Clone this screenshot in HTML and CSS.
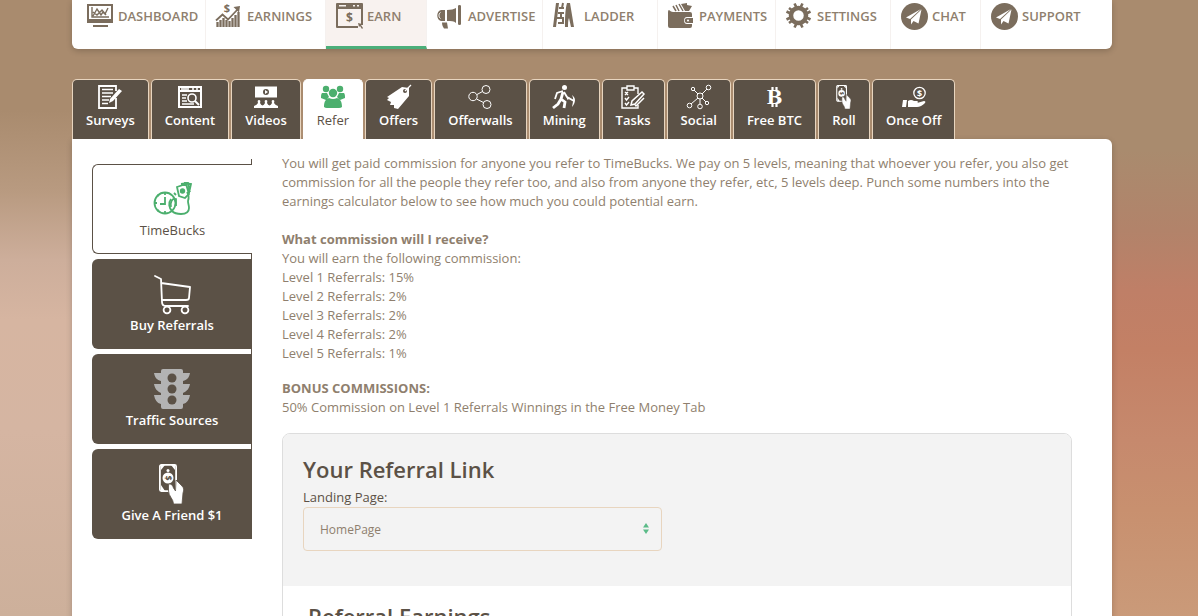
FILE: index.html
```html
<!DOCTYPE html>
<html lang="en">
<head>
  <meta charset="UTF-8" />
  <meta name="viewport" content="width=device-width, initial-scale=1.0" />
  <title>TimeBucks - Refer</title>
  <link rel="stylesheet" href="styles.css">
</head>
<body>
  <!-- icons used more than once -->
  <svg class="sprite" aria-hidden="true">
    <symbol id="icon-cash-hand" viewBox="0 0 40 40">
      <rect x="7.900" y="0.900" width="16.200" height="26.200" rx="1.500" fill="none" stroke="currentColor" stroke-width="1.800"/>
      <path d="M9 1h4L9 6zM23 1h-4l4 5zM9 27v-6l4 6z" fill="currentColor"/>
      <circle cx="16" cy="6.500" r="1.500" fill="currentColor"/>
      <circle cx="16" cy="14" r="5.500" fill="currentColor"/>
      <text x="16" y="17.200" font-size="9" font-weight="bold" text-anchor="middle" fill="#5b5146" transform="rotate(90 16 14)">$</text>
      <path d="M17.500 20c2 0 3 1 4 4l2 3 .500-11 6 6c2 2 2 4 1 7l-1 11H21.500c0-5-5-8-5-13v-5q0-2 1-2z" fill="currentColor" stroke="#5b5146" stroke-width="0.800"/>
    </symbol>
    <symbol id="icon-plane" viewBox="0 0 27 27">
      <circle cx="13.500" cy="13.500" r="13.500" fill="currentColor"/>
      <path d="M20 6 5 14.500l4 1.500zM20.500 6.500 10 16.500v5l2.500-3.500 5 2.500z" fill="#fff"/>
    </symbol>
  </svg>

  <div class="container">
    <nav class="main-nav">
      <a href="#">
        <svg class="nav-icon" viewBox="0 0 27 27"><path d="M0 1h26v19H0zm2 2v13h22V3zM6 22h15v2H6z" fill="currentColor" fill-rule="evenodd"/><path d="M5 4v10h17M6 13l4-7 4 6 2-3 2 2 3-6M6 9l4 3 5-5 4 5" fill="none" stroke="currentColor" stroke-width="1.400"/></svg>
        Dashboard
      </a>
      <a href="#">
        <svg class="nav-icon" viewBox="0 0 27 27"><path d="M1.500 19v5M4.500 17v7M7.500 15v9M10.500 17v7M13.500 18v6M16.500 15v9M19.500 12v12M22.500 9v15" stroke="currentColor" stroke-width="2.300"/><path d="M0 17.500l6.500-6 5.500 5L22 6" fill="none" stroke="currentColor" stroke-width="1.800"/><path d="M17.500 4l6.500-1-1 6.500z" fill="currentColor"/><text x="11" y="9" font-size="11" font-weight="bold" text-anchor="middle" fill="currentColor">$</text></svg>
        Earnings
      </a>
      <a href="#" class="active">
        <svg class="nav-icon" viewBox="0 0 27 27"><path d="M1 0h25q1 0 1 1v21h-2V6H2v17h20v2H1q-1 0-1-1V1q0-1 1-1zm2 2v1.500h7V2zm14 0v1.500h2V2zm4 0v1.500h2V2z" fill="currentColor" fill-rule="evenodd"/><text x="13.500" y="19" font-size="12" font-weight="bold" text-anchor="middle" fill="currentColor">$</text><path d="M22 20l4 1-1 1 2 3-1 1-2-3-1 1z" fill="currentColor"/></svg>
        Earn
      </a>
      <a href="#">
        <svg class="nav-icon" viewBox="0 0 27 27"><path d="M4 7h4v11H4c-5-1-5-10 0-11zM10 7c4 0 7-1 9-2v15c-2-2-5-2-9-2zM21 3q0-1 1.500-1t1.500 1v18q0 1-1.500 1T21 21zM5 19.500h5l1 6H7c-1-2-2-3-2-6z" fill="currentColor"/><path d="M3.500 9.500c-2 1-2 5 0 6" fill="none" stroke="#fff"/></svg>
        Advertise
      </a>
      <a href="#">
        <svg class="nav-icon" viewBox="0 0 27 27"><path d="M3 0h3L3 24H0zM14 0h3l4 24h-3l-2-9c-1 2-1 6-1 9h-3c0-7 0-17 2-24z" fill="currentColor"/><path d="M6 5h5M5 10h6M4 15h6v5H5M10 0 9 5M8 10v5" fill="none" stroke="currentColor" stroke-width="2"/></svg>
        Ladder
      </a>
      <a href="#">
        <svg class="nav-icon" viewBox="0 0 27 27"><path d="M1 7q2 2 4 2h17q2 0 2 2v3h-5c-4 0-4 7 0 7h5v2q0 2-2 2H2q-2 0-2-2V9q0-2 1-2zM19 15h6v5h-6c-3 0-3-5 0-5zM13 1l6-1v2l5 1-3 5h-4z" fill="currentColor"/><path d="M5 3l3 5M8 2l3 6M11 1l4 7" stroke="currentColor" stroke-width="1.500"/><circle cx="20" cy="17.500" r="1" fill="#fff"/></svg>
        Payments
      </a>
      <a href="#">
        <svg class="nav-icon" viewBox="0 0 27 27"><circle cx="12.500" cy="12.500" r="7.500" fill="none" stroke="currentColor" stroke-width="4.500"/><path d="M8.500.500l2 4M16.500.500l-2 4M8.500 24.500l2-4M16.500 24.500l-2-4M.500 8.500l4 2M.500 16.500l4-2M24.500 8.500l-4 2M24.500 16.500l-4-2M3 5l4 3M22 5l-4 3M3 20l4-3M22 20l-4-3" stroke="currentColor" stroke-width="2.600"/></svg>
        Settings
      </a>
      <a href="#">
        <svg class="nav-icon"><use href="#icon-plane"/></svg>
        Chat
      </a>
      <a href="#">
        <svg class="nav-icon"><use href="#icon-plane"/></svg>
        Support
      </a>
    </nav>

    <nav class="tabs">
      <a href="#">
        <svg class="tab-icon" viewBox="0 0 24 24"><path d="M18 13v10H1V1h17v5" fill="none" stroke="currentColor" stroke-width="1.800"/><path d="M4 4.500h11M4 8h11M4 11.500h9M4 15h7M4 18.500h6" stroke="currentColor" stroke-width="1.300"/><path d="M21 4l3 2-9 10-4 2 1-4z" fill="currentColor"/></svg>
        Surveys
      </a>
      <a href="#">
        <svg class="tab-icon" viewBox="0 0 24 24"><path d="M0 1h24v22H0zm2 2v2h20V3zm0 4v14h20V7z" fill="currentColor" fill-rule="evenodd"/><path d="M3 4h8M14 4h2M18 4h2M4 10h5M4 13h4M4 16h5M4 19h12" stroke="currentColor" stroke-width="1.300"/><circle cx="14" cy="13" r="4" fill="none" stroke="currentColor" stroke-width="1.600"/><path d="M17 16l4 4" stroke="currentColor" stroke-width="2"/></svg>
        Content
      </a>
      <a href="#">
        <svg class="tab-icon" viewBox="0 0 24 24"><path d="M1 1.500h22v11H1z" fill="currentColor"/><circle cx="12" cy="7" r="3" fill="#5b5146"/><path d="M11 5v4l3-2z" fill="currentColor"/><path d="M0 23v-2q3-1 4-3-1-3 1-3t1 3q1 2 2.500 2.500Q10 20 11 18q-1-3 1-3t1 3q1 2 2.500 2.500Q17 20 18 18q-1-3 1-3t1 3q1 2 4 3v2z" fill="currentColor"/></svg>
        Videos
      </a>
      <a href="#" class="active">
        <svg class="tab-icon" viewBox="0 0 24 24"><g fill="currentColor"><circle cx="5" cy="4" r="3.200"/><circle cx="19" cy="4" r="3.200"/><circle cx="12" cy="8" r="4.200"/><path d="M1 8h5l2 4-3 3-5-2c0-2 0-4 1-5zM23 8h-5l-2 4 3 3 5-2c0-2 0-4-1-5zM8 13q4 2 8 0c3 1 5 3 5 9q-1 1-3 1H6q-2 0-3-1c0-6 2-8 5-9z"/></g></svg>
        Refer
      </a>
      <a href="#">
        <svg class="tab-icon" viewBox="0 0 24 24"><path d="M0 12 15 2l7 1v8L11 24l-4-1 0-3-4 0 1-3-4-2 2-2z" fill="currentColor"/><circle cx="18" cy="6" r="2" fill="#5b5146"/><path d="M18 6l6-6" stroke="currentColor" stroke-width="1.200"/></svg>
        Offers
      </a>
      <a href="#">
        <svg class="tab-icon thin" viewBox="0 0 24 24"><circle cx="5" cy="11.500" r="4.200"/><circle cx="18" cy="4.500" r="4"/><circle cx="19" cy="19.500" r="4"/><path d="M9 9.500l5.500-3M8.500 14l7 3.500"/></svg>
        Offerwalls
      </a>
      <a href="#">
        <svg class="tab-icon" viewBox="0 0 24 24"><circle cx="12.500" cy="2.500" r="2.500" fill="currentColor"/><path d="M11 7 9 14l4 3-1 6M9 14l-3 5-5 4" fill="none" stroke="currentColor" stroke-width="2.800"/><path d="M11 6 5 8l-2 6M12 7l3 5 7 4M15 14l3-1" fill="none" stroke="currentColor" stroke-width="1.800"/><path d="M20 10c4 3 4 7 0 12 1-5 2-8 0-12z" fill="currentColor"/></svg>
        Mining
      </a>
      <a href="#">
        <svg class="tab-icon" viewBox="0 0 24 24"><path d="M17 9V3h-4V1H6v2H1v20h16v-3M6 3v2h7V3M4 7l3 3M7 7l-3 3M4 13l1.500 2L8 12M4 18l1.500 2L8 17" fill="none" stroke="currentColor" stroke-width="1.400"/><path d="M10 20l1-4 10-9 2 2-9 10zM14 20l1 1 8-8" fill="none" stroke="currentColor" stroke-width="1.500"/></svg>
        Tasks
      </a>
      <a href="#">
        <svg class="tab-icon thin" viewBox="0 0 24 24"><circle cx="13" cy="11" r="3"/><circle cx="21.500" cy="2.500" r="2.300"/><circle cx="6" cy="4" r="1.700"/><circle cx="2.500" cy="20.500" r="2.300"/><circle cx="13" cy="21.500" r="2.300"/><circle cx="20" cy="18" r="1.700"/><path d="M15 9l5-5M7 5l4 4M11 13l-7 6M13 14v5M15 13l4 4"/></svg>
        Social
      </a>
      <a href="#">
        <svg class="tab-icon" viewBox="0 0 24 24"><path d="M10.500 2v4M14.500 2v4M10.500 18v4M14.500 18v4" stroke="currentColor" stroke-width="2.200"/><text class="slab" x="12.500" y="19" font-size="19" text-anchor="middle" fill="currentColor">B</text></svg>
        Free BTC
      </a>
      <a href="#">
        <svg class="tab-icon"><use href="#icon-cash-hand"/></svg>
        Roll
      </a>
      <a href="#">
        <svg class="tab-icon" viewBox="0 0 24 24"><circle cx="17.500" cy="8" r="5.700" fill="none" stroke="currentColor" stroke-width="1.300"/><text x="17.500" y="11.500" font-size="9" font-weight="bold" text-anchor="middle" fill="currentColor">$</text><path d="M1 15h4l-1 7H0zM6 16q3-2 6 0h3q2 1 0 2h-4 4l7-2q2 0 1 2-4 4-8 4H6z" fill="currentColor"/></svg>
        Once Off
      </a>
    </nav>

    <div class="panel">
      <nav class="side-menu">
        <a href="#" class="active">
          <svg class="side-icon" viewBox="0 0 40 40"><g fill="none" stroke="currentColor" stroke-width="1.800"><circle cx="12" cy="24" r="10.500"/><path d="M12 18v7H7M12 13v3M12 32v3M1 24h3M4 16l2 1M4 32l2-1"/><path d="M18 20c-3 4-2 9 1 12q3 3 9 3 8 0 8-6c0-3-1-4-1-7 1-3 1-6-1-9"/><path d="M18 28c-1-5 1-9 5-8v7"/><path d="M24 8l9-3 3 10-4 4-6-2zM28 5l7-1 2 9M31 4l7 1-2 9M21 14l2 2"/></g><circle cx="29.500" cy="12" r="2.700" fill="currentColor"/></svg>
          TimeBucks
        </a>
        <a href="#">
          <svg class="side-icon" viewBox="0 0 40 40"><g fill="none" stroke="currentColor" stroke-width="1.800" stroke-linejoin="round" stroke-linecap="round"><path d="M3 2l6 3 1 23q0 4 4 4h22M9 9l29 4-1 11q0 2-3 2H10"/><circle cx="15" cy="36" r="3.400"/><circle cx="33" cy="36" r="3.400"/></g></svg>
          Buy Referrals
        </a>
        <a href="#">
          <svg class="side-icon" viewBox="0 0 40 40"><path d="M9 2q0-2 2-2h18q2 0 2 2v2h7c-1 5-3 7-7 8v3h7c-1 5-3 7-7 9v2h7c-1 5-3 8-7 9v3q0 2-2 2H11q-2 0-2-2v-3c-4-1-6-4-7-9h7v-2c-4-2-6-4-7-9h7v-3c-4-1-6-3-7-8h7z" fill="#b3b3b3"/><g fill="#5b5146"><circle cx="20" cy="9" r="4.500"/><circle cx="20" cy="20" r="4.500"/><circle cx="20" cy="31" r="4.500"/></g></svg>
          Traffic Sources
        </a>
        <a href="#">
          <svg class="side-icon"><use href="#icon-cash-hand"/></svg>
          Give A Friend $1
        </a>
      </nav>

      <main class="content">
        <p>You will get paid commission for anyone you refer to TimeBucks. We pay on 5 levels, meaning that whoever you refer, you also get commission for all the people they refer too, and also from anyone they refer, etc, 5 levels deep. Punch some numbers into the earnings calculator below to see how much you could potential earn.<br><br>
          <b>What commission will I receive?</b><br>
          You will earn the following commission:<br>
          Level 1 Referrals: 15%<br>
          Level 2 Referrals: 2%<br>
          Level 3 Referrals: 2%<br>
          Level 4 Referrals: 2%<br>
          Level 5 Referrals: 1%</p>
        <p><b>BONUS COMMISSIONS:</b><br>
          50% Commission on Level 1 Referrals Winnings in the Free Money Tab</p>

        <div class="card">
          <section class="referral-link">
            <h2>Your Referral Link</h2>
            <label for="landing">Landing Page:</label>
            <div class="select-wrap">
              <select id="landing">
                <option>HomePage</option>
              </select>
              <svg class="arrows" viewBox="0 0 6 11"><path d="M0 4.500 3 0l3 4.500zM0 6.500h6L3 11z" fill="#5bbb88"/></svg>
            </div>
          </section>
          <section class="earnings">
            <h2>Referral Earnings</h2>
          </section>
        </div>
      </main>
    </div>
  </div>
</body>
</html>
```

FILE: styles.css
```css
* {
  box-sizing: border-box;
}

html {
  min-height: 100%;
  background:
    linear-gradient(#a98b6e 0, #a98b6e 110px, #b89a80 190px, #cdae9b 260px, #d6b5a1 320px, #d5b5a2 430px, #cdb09b 616px) left / 50% 100% no-repeat,
    linear-gradient(#a98b6e 0, #a98b6e 150px, #b2836a 230px, #bf7f67 290px, #c38065 350px, #c6896d 440px, #c8906f 510px, #ca9a79 616px) right / 50% 100% no-repeat;
}

body {
  margin: 0;
  padding-right: 14px;
  height: 100vh;
  overflow: hidden;
  font-family: "Open Sans", sans-serif;
  font-size: 13px;
  line-height: 19px;
  color: #8f7f6e;
}

a {
  color: inherit;
  text-decoration: none;
}

svg {
  overflow: visible;
}

.sprite {
  display: none;
}

.container {
  max-width: 1040px;
  margin: 0 auto;
}

/* top navigation */
.main-nav {
  display: grid;
  grid-template-columns: 134fr 120fr 101fr 116fr 115fr 118fr 115fr 90fr 131fr;
  height: 49px;
  background-color: #fff;
  border-radius: 0 0 6px 6px;
  box-shadow: 0 2px 6px rgba(0, 0, 0, 0.2);
}

.main-nav a {
  display: flex;
  align-items: flex-start;
  gap: 4px;
  padding: 3px 0 0 10px;
  border-right: 1px solid #f5f1ef;
  font-weight: 600;
  line-height: 27px;
  text-transform: uppercase;
}

.main-nav a:first-child {
  padding-left: 15px;
}

.main-nav a:last-child {
  border-right: none;
}

.main-nav a.active {
  background-color: #f8f2ef;
  border-bottom: 3px solid #4caf7a;
}

.nav-icon {
  flex: none;
  width: 27px;
  height: 27px;
  color: #7b6d5d;
}

/* earn tabs */
.tabs {
  display: flex;
  gap: 2px;
  margin-top: 30px;
}

.tabs a {
  display: flex;
  flex-direction: column;
  align-items: center;
  height: 60px;
  padding: 5px 13px 0;
  background-color: #5b5146;
  border: 1px solid #e8d5bf;
  border-bottom: none;
  border-radius: 5px 5px 0 0;
  color: #fff;
  font-weight: 600;
  line-height: 22px;
}

.tabs a.active {
  background-color: #fff;
  border-color: #fff;
  color: #5b5146;
  font-weight: normal;
}

.tab-icon {
  width: 24px;
  height: 24px;
}

.tabs .active .tab-icon,
.side-menu .active .side-icon {
  color: #4caf6e;
}

.thin {
  fill: none;
  stroke: currentColor;
  stroke-width: 1px;
}

.slab {
  font-family: "DejaVu Serif", serif;
  font-weight: bold;
}

/* page panel */
.panel {
  display: flex;
  align-items: flex-start;
  gap: 30px;
  padding: 15px 40px 40px 20px;
  background-color: #fff;
  border-radius: 0 6px 6px 6px;
  box-shadow: 0 2px 6px rgba(0, 0, 0, 0.2);
}

.side-menu {
  flex: none;
  display: flex;
  flex-direction: column;
  gap: 5px;
  width: 160px;
  margin-top: 5px;
  padding-top: 5px;
  border-right: 1px solid #5b5146;
}

.side-menu a {
  display: flex;
  flex-direction: column;
  align-items: center;
  height: 90px;
  margin-right: -1px;
  padding-top: 15px;
  background-color: #5b5146;
  border-radius: 6px 0 0 6px;
  color: #fff;
  font-weight: 600;
  line-height: 22px;
}

.side-menu a.active {
  padding-top: 14px;
  background-color: #fff;
  border: 1px solid #5b5146;
  border-right: none;
  color: #5b5146;
  font-weight: normal;
}

.side-icon {
  width: 40px;
  height: 40px;
}

.content {
  flex: 1;
  min-width: 0;
}

.content p {
  margin: 0 0 16px;
}

.card {
  border: 1px solid #ddd;
  border-radius: 8px;
  overflow: hidden;
}

.card h2 {
  margin: 0;
  font-size: 22px;
  font-weight: 600;
  line-height: 30px;
  color: #5b5146;
}

.referral-link {
  padding: 20px 20px 35px;
  background-color: #f3f3f3;
}

.referral-link h2 {
  margin-bottom: 4px;
}

.referral-link label {
  display: block;
  color: #5b5146;
}

.select-wrap {
  position: relative;
  width: 48%;
}

.select-wrap select {
  appearance: none;
  width: 100%;
  height: 44px;
  padding: 0 16px;
  background-color: transparent;
  border: 1px solid #e8d5bf;
  border-radius: 4px;
  color: #8f7f6e;
  font-family: inherit;
  font-size: 12px;
}

.arrows {
  position: absolute;
  top: 16px;
  right: 13px;
  width: 6px;
  height: 11px;
  pointer-events: none;
}

.earnings {
  min-height: 200px;
  padding: 15px 25px;
}
```
